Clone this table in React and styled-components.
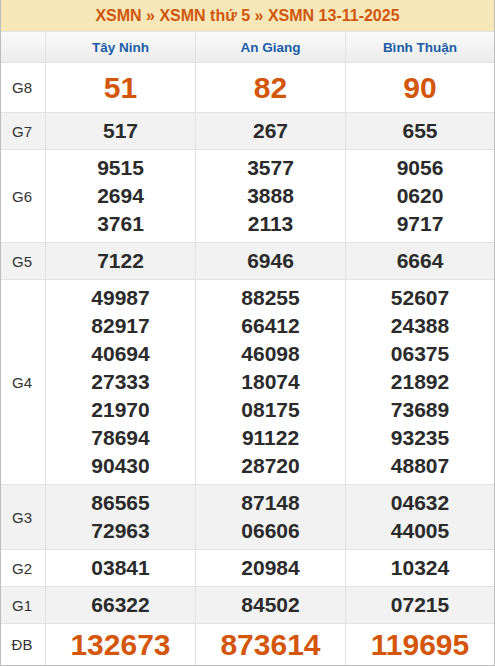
import React from "react";
import styled, { createGlobalStyle } from "styled-components";

const Global = createGlobalStyle`
  html, body { margin: 0; padding: 0; background: #fff; }
  body { font-family: "Liberation Sans", Arial, sans-serif; }
`;

const Board = styled.div`
  width: 495px;
  box-sizing: border-box;
  border: 1px solid #bdbdbd;
  border-top: none;
  display: grid;
  grid-template-columns: 44px 149px 149px 1fr;
  gap: 1px;
  background: #e2e2e2;
`;

const Title = styled.div`
  grid-column: 1 / -1;
  height: 31px;
  background: #f7e8b9;
  color: #d0560c;
  font-weight: bold;
  font-size: 16px;
  display: flex;
  align-items: center;
  justify-content: center;
`;

const HeadCell = styled.div`
  height: 30px;
  background: linear-gradient(#fafafa, #ececec);
  color: #1a5ca6;
  font-weight: bold;
  font-size: 13.5px;
  display: flex;
  align-items: center;
  justify-content: center;
`;

const Label = styled.div`
  background: ${(p) => (p.$alt ? "#f2f2f2" : "#fff")};
  color: #333;
  font-size: 15px;
  display: flex;
  align-items: center;
  justify-content: center;
  padding-right: 2px;
`;

const Cell = styled.div`
  background: ${(p) => (p.$alt ? "#f2f2f2" : "#fff")};
  display: flex;
  flex-direction: column;
  align-items: center;
  justify-content: center;
  padding: ${(p) => (p.$big ? "0" : "4px 0")};
  min-height: ${(p) => p.$h || 0}px;
  box-sizing: border-box;
`;

const Num = styled.div`
  font-weight: bold;
  font-size: ${(p) => (p.$big ? "30px" : "21px")};
  line-height: ${(p) => (p.$big ? "36px" : "28px")};
  color: ${(p) => (p.$big ? "#d4560b" : "#2b2b2b")};
`;

const provinces = ["Tây Ninh", "An Giang", "Bình Thuận"];

const rows = [
  { label: "G8", big: true, h: 49, data: [["51"], ["82"], ["90"]] },
  { label: "G7", alt: true, data: [["517"], ["267"], ["655"]] },
  { label: "G6", data: [["9515", "2694", "3761"], ["3577", "3888", "2113"], ["9056", "0620", "9717"]] },
  { label: "G5", alt: true, data: [["7122"], ["6946"], ["6664"]] },
  {
    label: "G4",
    data: [
      ["49987", "82917", "40694", "27333", "21970", "78694", "90430"],
      ["88255", "66412", "46098", "18074", "08175", "91122", "28720"],
      ["52607", "24388", "06375", "21892", "73689", "93235", "48807"],
    ],
  },
  { label: "G3", alt: true, data: [["86565", "72963"], ["87148", "06606"], ["04632", "44005"]] },
  { label: "G2", data: [["03841"], ["20984"], ["10324"]] },
  { label: "G1", alt: true, data: [["66322"], ["84502"], ["07215"]] },
  { label: "ĐB", big: true, h: 41, data: [["132673"], ["873614"], ["119695"]] },
];

export default function App() {
  return (
    <>
      <Global />
      <Board>
        <Title>XSMN » XSMN thứ 5 » XSMN 13-11-2025</Title>
        <HeadCell />
        {provinces.map((p) => (
          <HeadCell key={p}>{p}</HeadCell>
        ))}
        {rows.map((r) => (
          <React.Fragment key={r.label}>
            <Label $alt={r.alt}>{r.label}</Label>
            {r.data.map((col, i) => (
              <Cell key={i} $alt={r.alt} $big={r.big} $h={r.h}>
                {col.map((n) => (
                  <Num key={n} $big={r.big}>
                    {n}
                  </Num>
                ))}
              </Cell>
            ))}
          </React.Fragment>
        ))}
      </Board>
    </>
  );
}
